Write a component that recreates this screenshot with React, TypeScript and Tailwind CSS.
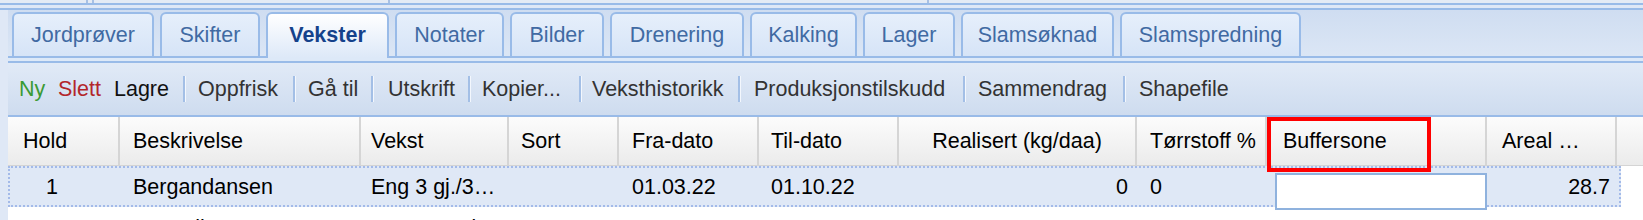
import React from "react";

const tabs = [
  { label: "Jordprøver", w: "w-[142px]" },
  { label: "Skifter", w: "w-[100px]" },
  { label: "Vekster", w: "w-[123px]", active: true },
  { label: "Notater", w: "w-[109px]" },
  { label: "Bilder", w: "w-[94px]" },
  { label: "Drenering", w: "w-[134px]" },
  { label: "Kalking", w: "w-[107px]" },
  { label: "Lager", w: "w-[92px]" },
  { label: "Slamsøknad", w: "w-[153px]" },
  { label: "Slamspredning", w: "w-[181px]" },
];

// toolbar: text items get a fixed slot so separators land where they should
const tools = [
  { label: "Oppfrisk", w: "w-[95px]" },
  { label: "Gå til", w: "w-[63px]" },
  { label: "Utskrift", w: "w-[80px]" },
  { label: "Kopier...", w: "w-[97px]" },
  { label: "Veksthistorikk", w: "w-[146px]" },
  { label: "Produksjonstilskudd", w: "w-[209px]" },
  { label: "Sammendrag", w: "w-[145px]" },
  { label: "Shapefile", w: "w-[120px]" },
];

const sepWidths = ["w-[15px]", "w-[15px]", "w-[17px]", "w-[14px]", "w-[13px]", "w-[16px]", "w-[15px]", "w-[16px]"];

function Sep({ w }: { w: string }) {
  return (
    <div className={`flex shrink-0 items-center ${w}`}>
      <div className="h-[26px] w-[3px] border-l-2 border-r border-l-[#a3bfe6] border-r-[#f3f7fd]" />
    </div>
  );
}

const cols = [
  { label: "Hold", w: "w-[112px]", cls: "pl-[15px]" },
  { label: "Beskrivelse", w: "w-[241px]", cls: "pl-[13px]" },
  { label: "Vekst", w: "w-[148px]", cls: "pl-[10px]" },
  { label: "Sort", w: "w-[110px]", cls: "pl-[12px]" },
  { label: "Fra-dato", w: "w-[140px]", cls: "pl-[13px]" },
  { label: "Til-dato", w: "w-[140px]", cls: "pl-[12px]" },
  { label: "Realisert (kg/daa)", w: "w-[238px]", cls: "justify-center" },
  { label: "Tørrstoff %", w: "w-[130px]", cls: "pl-[13px]" },
  { label: "Buffersone", w: "w-[220px]", cls: "pl-[16px]" },
  { label: "Areal …", w: "w-[130px]", cls: "pl-[15px]" },
];

type Row = {
  hold: string;
  besk: string;
  vekst: string;
  fra: string;
  til: string;
  real: string;
  torr: string;
  areal: string;
};

const rows: Row[] = [
  { hold: "1", besk: "Bergandansen", vekst: "Eng 3 gj./3…", fra: "01.03.22", til: "01.10.22", real: "0", torr: "0", areal: "28.7" },
  { hold: "2", besk: "Nattvollen", vekst: "Bygg 6-rad", fra: "01.03.22", til: "01.10.22", real: "0", torr: "0", areal: "25.1" },
];

function GridRow({ r, selected }: { r: Row; selected?: boolean }) {
  return (
    <div
      className={
        selected
          ? "flex h-[41px] w-[1613px] border-2 border-dotted border-[#a3bae9] bg-[#dfe8f6] pt-[1px]"
          : "flex h-[41px] w-[1613px] border-2 border-transparent bg-white pt-[1px]"
      }
    >
      <div className="flex w-[110px] shrink-0 items-center pl-[36px]">{r.hold}</div>
      <div className="flex w-[241px] shrink-0 items-center pl-[13px]">{r.besk}</div>
      <div className="flex w-[148px] shrink-0 items-center pl-[10px]">{r.vekst}</div>
      <div className="w-[110px] shrink-0" />
      <div className="flex w-[140px] shrink-0 items-center pl-[13px]">{r.fra}</div>
      <div className="flex w-[140px] shrink-0 items-center pl-[12px]">{r.til}</div>
      <div className="flex w-[238px] shrink-0 items-center justify-end pr-[9px]">{r.real}</div>
      <div className="flex w-[130px] shrink-0 items-center pl-[13px]">{r.torr}</div>
      <div className="relative w-[220px] shrink-0">
        {selected && (
          <div className="absolute left-[8px] top-[4px] h-[37px] w-[212px] border-2 border-[#8fb2de] bg-white" />
        )}
      </div>
      <div className="flex w-[130px] shrink-0 items-center justify-end pr-[7px]">{r.areal}</div>
      <div className="flex-1" />
    </div>
  );
}

export default function App() {
  return (
    <div className="relative h-[220px] w-[1643px] overflow-hidden bg-[#dfe8f6] font-['Liberation_Sans',Arial,sans-serif]">
      {/* bottom edge of the panel above */}
      <div className="flex h-[3px] bg-[#e4ebf5]">
        <div className="w-[86px] shrink-0" />
        <div className="w-[2px] shrink-0 bg-[#a7c0e4]" />
        <div className="w-[4px] shrink-0" />
        <div className="w-[2px] shrink-0 bg-[#a7c0e4]" />
        <div className="w-[294px] shrink-0" />
        <div className="w-[2px] shrink-0 bg-[#a7c0e4]" />
        <div className="w-[537px] shrink-0" />
        <div className="w-[2px] shrink-0 bg-[#a7c0e4]" />
      </div>
      <div className="h-[2px] bg-[#99bbe8]" />
      <div className="h-[3px] bg-[#dfe8f6]" />
      <div className="h-[2px] bg-[#99bbe8]" />

      <div className="flex">
        <div className="w-[8px] shrink-0" />
        <div className="min-w-0 flex-1">
          {/* tab strip */}
          <div className="flex h-[46px] items-end gap-[6px] bg-gradient-to-b from-[#cfddf1] to-[#dbe6f5] pl-[4px]">
            {tabs.map((t) =>
              t.active ? (
                <div
                  key={t.label}
                  className={`relative z-10 -mb-[2px] flex h-[46px] shrink-0 items-center justify-center rounded-t-[6px] border-2 border-b-0 border-[#99bbe8] bg-gradient-to-b from-[#ffffff] to-[#dde9f8] pb-[2px] text-[21.5px] font-bold text-[#15428b] ${t.w}`}
                >
                  {t.label}
                </div>
              ) : (
                <div
                  key={t.label}
                  className={`flex h-[44px] shrink-0 items-center justify-center rounded-t-[6px] border-2 border-b-0 border-[#99bbe8] bg-gradient-to-b from-[#e6effb] to-[#d6e4f7] text-[21.5px] text-[#416aa3] ${t.w}`}
                >
                  {t.label}
                </div>
              )
            )}
          </div>
          <div className="h-[7px] border-y-2 border-[#99bbe8] bg-[#dde9f8]" />

          {/* toolbar */}
          <div className="flex h-[54px] items-center border-b-2 border-[#99bbe8] bg-gradient-to-b from-[#e1eaf7] to-[#cedcef] pl-[11px] text-[21.5px] text-[#333]">
            <span className="w-[39px] shrink-0 text-[#3b9a35]">Ny</span>
            <span className="w-[56px] shrink-0 text-[#b3262b]">Slett</span>
            <span className="w-[69px] shrink-0 text-[#111]">Lagre</span>
            {tools.map((t, i) => (
              <React.Fragment key={t.label}>
                <Sep w={sepWidths[i]} />
                <span className={`shrink-0 ${t.w}`}>{t.label}</span>
              </React.Fragment>
            ))}
          </div>

          {/* grid header */}
          <div className="flex h-[49px] border-b border-[#d4d4d4] bg-gradient-to-b from-[#fcfcfc] to-[#ebebeb] text-[21.5px] text-black">
            {cols.map((c) => (
              <div
                key={c.label}
                className={`flex shrink-0 items-center border-r-2 border-[#d5d5d5] ${c.w} ${c.cls}`}
              >
                {c.label}
              </div>
            ))}
            <div className="flex-1" />
          </div>

          {/* grid body */}
          <div className="bg-white text-[21.5px] text-black">
            <GridRow r={rows[0]} selected />
            <GridRow r={rows[1]} />
          </div>
        </div>
      </div>

      {/* annotation box around the Buffersone column header */}
      <div className="absolute left-[1267px] top-[117px] h-[55px] w-[164px] border-4 border-[#ff0000]" />
    </div>
  );
}
